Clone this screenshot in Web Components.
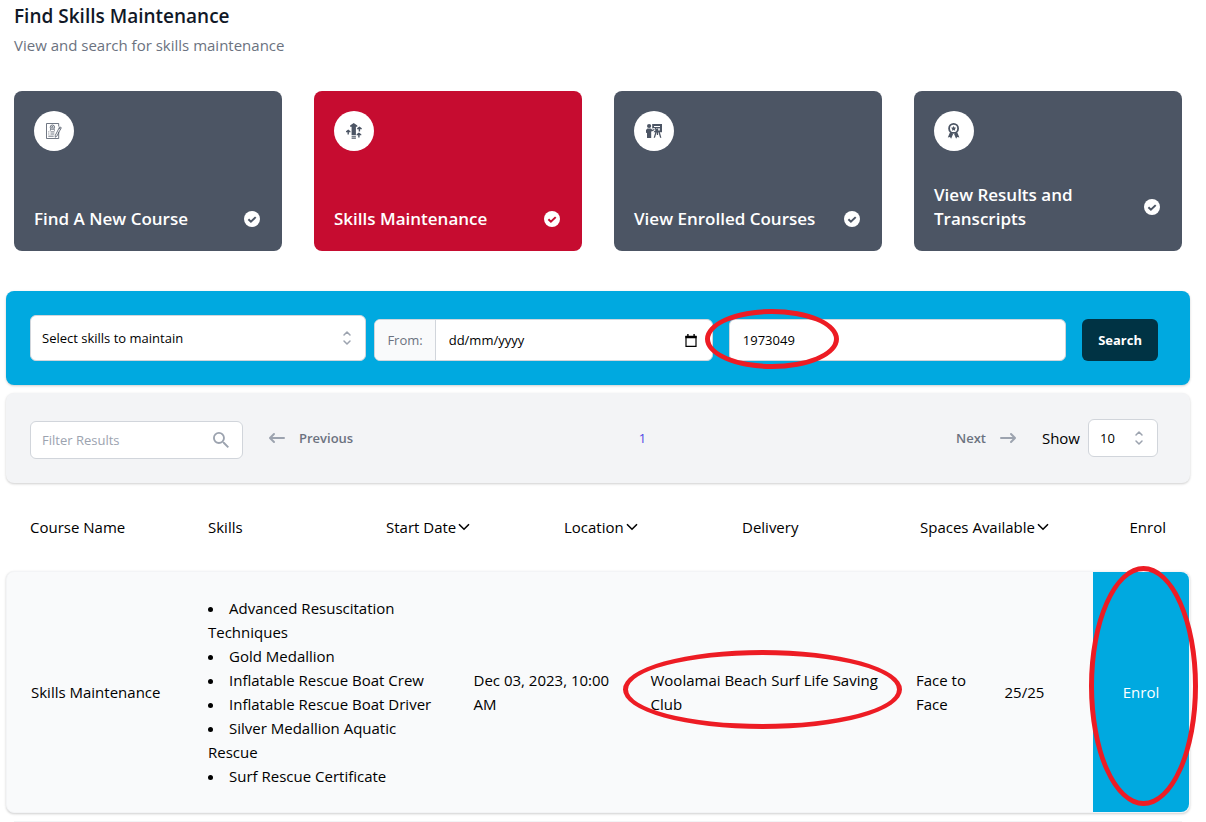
<!DOCTYPE html>
<html lang="en">
<head>
<meta charset="utf-8">
<meta name="viewport" content="width=device-width, initial-scale=1">
<title>Find Skills Maintenance</title>
<style>
  :root {
    --color-slate: #4c5564;
    --color-red: #c60c30;
    --color-blue: #00a9e0;
    --color-navy: #003344;
    --color-border: #d1d5db;
    --color-muted: #6b7280;
    --color-icon: #9ca3af;
    --color-mark: #ed1c24;
    --radius-sm: 6px;
    --radius-md: 8px;
    --shadow: 0 1px 3px rgb(0 0 0 / 12%), 0 1px 2px rgb(0 0 0 / 8%);
    --text-sm: 13px;
    --text-base: 15px;
  }

  body {
    margin: 0;
    background: #fff;
    color: #000;
    font: 400 15px/24px "Open Sans", "Noto Sans", sans-serif;
  }
</style>
</head>
<body>
<skills-page>
  <course-card slot="cards" icon="course">Find A New Course</course-card>
  <course-card slot="cards" icon="skills" active>Skills Maintenance</course-card>
  <course-card slot="cards" icon="enrolled">View Enrolled Courses</course-card>
  <course-card slot="cards" icon="results">View Results and Transcripts</course-card>
  <skills-search></skills-search>
  <results-toolbar></results-toolbar>
  <results-table></results-table>
</skills-page>

<script>
const icons = {
  course: `
    <svg viewBox="0 0 16 16" fill="none" stroke="#4c5564" stroke-width=".8">
      <path d="M12.7 8.8v6.7H.5V.5h12.2v3"/>
      <circle cx="6.4" cy="4.2" r="2.2"/><circle cx="6.4" cy="4.2" r=".8"/>
      <path d="M4.8 6l-.5 1.7M8 6l.5 1.7M2.3 8.9h1M4.5 8.9h4M2.3 11h1M4.5 11h3.8M2.3 13.2h5.4"/>
      <path d="M13.7 3.9l1.6.8-4.5 8.5-1.6 1 .1-1.9zM12.9 5.3l1.6.8"/>
    </svg>`,
  skills: `
    <svg viewBox="0 0 16 16" fill="#4c5564">
      <path d="M7.7 0l3.6 2.6v1.1H9.9v8.2H5.6V3.7H4.1V2.6zM5.6 12.7h4.3v1H5.6zM5.6 14.6h4.3v1.2H5.6z"/>
      <path d="M2.2 6.4l2.3 1.8v1H2.9v2.2H1.5V9.2H0v-1zM13.4 3.5l2.4 1.8v1h-1.7v2.2h-1.4V6.3h-1.6v-1zM12.9 9.4l2.4 1.8v1h-1.7v2.4h-1.4v-2.4h-1.6v-1z"/>
    </svg>`,
  enrolled: `
    <svg viewBox="0 0 16 16" fill="#4c5564">
      <circle cx="3.1" cy="3" r="2.1"/>
      <path d="M1.4 5.5h3.6l1.2 1.2 2-.7.5 1.1-2.9 1.5-.6-.4v6.8H1v-5L0 9.8V7z"/>
      <path fill-rule="evenodd" d="M6.2 1H16v8.2H7.6l.8-1.1h.8V5.9l-.8-.9-2.2.6zM8 2.9v1h6v-1zM10.4 5.2v.9h1v-.9zM12.2 5.2v2.3h1.6V5.2z"/>
      <path d="M9.3 9h1.4L9 14.8H7.7zM12.4 9h1.4l1.6 5.8h-1.3zM10.8 9h1.3v3h-1.3z"/>
    </svg>`,
  results: `
    <svg viewBox="0 0 16 16" fill="none" stroke="#4c5564" stroke-width="1.8">
      <circle cx="7.6" cy="5.4" r="4.5"/>
      <path d="M4 9.3h1.2l1.9 1.7-2 4.7-1.1-1.6-2.2.4zM11.2 9.3H10L8.100 11l2 4.700 1.100-1.600 2.200.4z" fill="#4c5564" stroke="none"/>
      <path d="M7.600 3l.8 1.600 1.800.2-1.300 1.200.3 1.800-1.600-.9-1.600.9.3-1.800L5 4.800l1.800-.2z" fill="#4c5564" stroke="none"/>
    </svg>`,
  check: `
    <svg viewBox="0 0 16 16">
      <circle cx="8" cy="8" r="8" fill="#fff"/>
      <path d="M4.4 8.3l2.5 2.4 4.8-4.6" fill="none" stroke="var(--card-color)" stroke-width="2"/>
    </svg>`,
  selector: `
    <svg class="selector" viewBox="0 0 20 20" fill="none" stroke="#9ca3af" stroke-width="1.5" stroke-linecap="round" stroke-linejoin="round">
      <path d="M7 7l3-3 3 3M13 13l-3 3-3-3"/>
    </svg>`,
  calendar: `
    <svg viewBox="0 0 12 13" width="12" height="13">
      <path d="M1 2.5h10v9.8H1z" fill="none" stroke="#000" stroke-width="1.2"/>
      <path d="M.4 1.7h11.2v2.6H.4zM2.2 0h1.4v2H2.2zM8.4 0h1.4v2H8.4z"/>
    </svg>`,
  search: `
    <svg viewBox="3 3 17.5 17.5" width="16" height="16" fill="#9ca3af">
      <path d="M15.5 14h-.79l-.28-.27A6.471 6.471 0 0 0 16 9.5 6.5 6.5 0 1 0 9.5 16c1.61 0 3.09-.59 4.23-1.57l.27.28v.79l5 4.99L20.49 19l-4.99-5zm-6 0C7.01 14 5 11.99 5 9.5S7.01 5 9.5 5 14 7.01 14 9.5 11.99 14 9.5 14z"/>
    </svg>`,
  arrowLeft: `
    <svg viewBox="0 0 20 20" width="20" height="20" fill="#9ca3af">
      <path d="M7.707 14.707a1 1 0 0 1-1.414 0l-4-4a1 1 0 0 1 0-1.414l4-4a1 1 0 0 1 1.414 1.414L5.414 9H17a1 1 0 1 1 0 2H5.414l2.293 2.293a1 1 0 0 1 0 1.414z"/>
    </svg>`,
  arrowRight: `
    <svg viewBox="0 0 20 20" width="20" height="20" fill="#9ca3af">
      <path d="M12.293 5.293a1 1 0 0 1 1.414 0l4 4a1 1 0 0 1 0 1.414l-4 4a1 1 0 0 1-1.414-1.414L14.586 11H3a1 1 0 1 1 0-2h11.586l-2.293-2.293a1 1 0 0 1 0-1.414z"/>
    </svg>`,
  chevron: `
    <svg viewBox="0 0 12 8" width="12" height="8" fill="none" stroke="#000" stroke-width="1.6">
      <path d="M1 1.2l5 5 5-5"/>
    </svg>`,
};

// Rules every shadow root starts from.
const base = `
  :host, *, *::before, *::after { box-sizing: border-box; }
  svg { display: block; flex: none; }
  input, select, button { margin: 0; font: inherit; color: inherit; }
  button { border: 0; padding: 0; background: none; cursor: pointer; }
`;

function define(tagName, html) {
  const template = document.createElement("template");
  template.innerHTML = html;

  customElements.define(tagName, class extends HTMLElement {
    constructor() {
      super();
      this.attachShadow({ mode: "open" }).append(template.content.cloneNode(true));
    }
  });
}

/** Ring laid over whatever it points out. */
define("ring-mark", `
  <style>
    :host {
      box-sizing: border-box;
      position: absolute;
      border: 5px solid var(--color-mark);
      border-radius: 50%;
      pointer-events: none;
    }
  </style>
`);

define("skills-page", `
  <style>
    ${base}
    :host {
      display: flex;
      flex-direction: column;
      gap: 8px;
      padding: 4px 16px 0 6px;
    }

    header {
      padding: 0 8px;
    }

    h1 {
      margin: 0;
      color: #111827;
      font-size: 19px;
      font-weight: 600;
      line-height: 24px;
    }

    p {
      margin: 5px 0 0;
      color: var(--color-muted);
      font-size: var(--text-base);
    }

    nav {
      display: grid;
      grid-template-columns: repeat(4, 1fr);
      gap: 32px;
      padding: 26px 8px 32px;
    }
  </style>
  <header>
    <h1>Find Skills Maintenance</h1>
    <p>View and search for skills maintenance</p>
  </header>
  <nav><slot name="cards"></slot></nav>
  <slot></slot>
`);

const cardTemplate = document.createElement("template");

cardTemplate.innerHTML = `
  <style>
    ${base}
    :host {
      --card-color: var(--color-slate);
      display: block;
    }

    :host([active]) {
      --card-color: var(--color-red);
    }

    a {
      display: flex;
      flex-direction: column;
      justify-content: space-between;
      min-height: 160px;
      border-radius: var(--radius-md);
      padding: 20px;
      background: var(--card-color);
      color: #fff;
      font-size: 17px;
      font-weight: 600;
      text-decoration: none;
    }

    .badge {
      display: grid;
      place-items: center;
      width: 40px;
      height: 40px;
      border-radius: 50%;
      background: #fff;
    }

    .row {
      display: flex;
      align-items: center;
      justify-content: space-between;
      gap: 16px;
      padding-right: 2px;
    }

    svg {
      width: 16px;
      height: 16px;
    }
  </style>
  <a href="#">
    <span class="badge"></span>
    <span class="row"><span><slot></slot></span>${icons.check}</span>
  </a>
`;

class CourseCard extends HTMLElement {
  constructor() {
    super();
    this.attachShadow({ mode: "open" }).append(cardTemplate.content.cloneNode(true));
  }

  connectedCallback() {
    this.shadowRoot.querySelector(".badge").innerHTML = icons[this.getAttribute("icon")] ?? "";
  }
}

customElements.define("course-card", CourseCard);

const selectTemplate = document.createElement("template");

selectTemplate.innerHTML = `
  <style>
    ${base}
    :host {
      display: grid;
      align-items: center;
      font-size: var(--text-sm);
    }

    select, .selector {
      grid-area: 1 / 1;
    }

    select {
      appearance: none;
      width: 100%;
      height: var(--select-height, 38px);
      border: 1px solid var(--color-border);
      border-radius: var(--radius-sm);
      padding: 0 32px 0 11px;
      background: #fff;
    }

    .selector {
      justify-self: end;
      width: 20px;
      height: 20px;
      margin-right: 9px;
      pointer-events: none;
    }
  </style>
  <select><option></option></select>
  ${icons.selector}
`;

class SelectBox extends HTMLElement {
  constructor() {
    super();
    this.attachShadow({ mode: "open" }).append(selectTemplate.content.cloneNode(true));
  }

  connectedCallback() {
    const select = this.shadowRoot.querySelector("select");
    select.setAttribute("aria-label", this.getAttribute("label"));
    select.options[0].textContent = this.getAttribute("value");
  }
}

customElements.define("select-box", SelectBox);

define("skills-search", `
  <style>
    ${base}
    :host {
      display: block;
      border-radius: var(--radius-md);
      padding: 24px 32px 24px 24px;
      background: var(--color-blue);
      box-shadow: var(--shadow);
      font-size: var(--text-sm);
    }

    form {
      display: flex;
      align-items: flex-end;
      gap: 16px;
    }

    .pair {
      display: flex;
      flex: 2 1 8px;
      align-items: flex-end;
      gap: 8px;
    }

    select-box {
      --select-height: 46px;
      flex: 1 1 0;
      min-width: 0;
    }

    .date, .number input {
      height: 42px;
      border: 1px solid var(--color-border);
      border-radius: var(--radius-sm);
      background: #fff;
    }

    .date {
      display: grid;
      grid-template-columns: auto 1fr auto;
      flex: 1 1 0;
      align-items: center;
      min-width: 0;
      overflow: hidden;
    }

    .date label {
      display: flex;
      align-items: center;
      align-self: stretch;
      border-right: 1px solid var(--color-border);
      padding: 0 12px;
      background: #f9fafb;
      color: var(--color-muted);
    }

    .date input {
      width: 100%;
      min-width: 0;
      border: 0;
      padding: 0 13px;
      background: none;
    }

    .date input::placeholder {
      color: #000;
      opacity: 1;
    }

    .date button {
      padding-right: 15px;
    }

    .number {
      position: relative;
      flex: 1 1 0;
    }

    .number input {
      display: block;
      width: 100%;
      padding: 0 13px;
    }

    .number ring-mark {
      top: -10px;
      left: -24px;
      width: 134px;
      height: 60px;
    }

    .submit {
      height: 42px;
      border-radius: var(--radius-sm);
      padding: 0 16px;
      background: var(--color-navy);
      color: #fff;
      font-weight: 700;
    }
  </style>
  <form>
    <div class="pair">
      <select-box label="Skills" value="Select skills to maintain"></select-box>
      <div class="date">
        <label for="from">From:</label>
        <input id="from" type="text" placeholder="dd/mm/yyyy">
        <button type="button" aria-label="Open calendar">${icons.calendar}</button>
      </div>
    </div>
    <div class="number">
      <input type="text" value="1973049" aria-label="Course number">
      <ring-mark></ring-mark>
    </div>
    <button class="submit" type="button">Search</button>
  </form>
`);

define("results-toolbar", `
  <style>
    ${base}
    :host {
      display: flex;
      align-items: center;
      gap: 24px;
      border-radius: var(--radius-md);
      padding: 24px 32px 24px 24px;
      background: #f3f4f6;
      box-shadow: var(--shadow);
      font-size: var(--text-sm);
    }

    .filter {
      display: flex;
      align-items: center;
      width: 213px;
      height: 38px;
      margin-top: 4px;
      border: 1px solid var(--color-border);
      border-radius: var(--radius-sm);
      padding: 0 13px 0 11px;
      background: #fff;
    }

    .filter input {
      flex: 1;
      min-width: 0;
      border: 0;
      padding: 0;
      background: none;
      outline: 0;
    }

    .filter input::placeholder {
      color: var(--color-icon);
      opacity: 1;
    }

    nav {
      display: flex;
      flex: 1;
      align-items: center;
    }

    nav a {
      display: flex;
      flex: 1;
      align-items: center;
      gap: 12px;
      color: var(--color-muted);
      font-weight: 600;
      text-decoration: none;
    }

    nav .page {
      flex: none;
      color: #4f46e5;
      font-weight: 500;
    }

    nav .next {
      justify-content: flex-end;
    }

    .size {
      display: flex;
      align-items: center;
      gap: 8px;
      font-size: var(--text-base);
    }

    .size select-box {
      width: 70px;
    }
  </style>
  <div class="filter">
    <input type="text" placeholder="Filter Results" aria-label="Filter Results">
    ${icons.search}
  </div>
  <nav aria-label="Pagination">
    <a href="#">${icons.arrowLeft}Previous</a>
    <a class="page" href="#" aria-current="page">1</a>
    <a class="next" href="#">Next${icons.arrowRight}</a>
  </nav>
  <div class="size">
    <span>Show</span>
    <select-box label="Show" value="10"></select-box>
  </div>
`);

define("results-table", `
  <style>
    ${base}
    :host {
      display: block;
      font-size: var(--text-base);
    }

    table, thead, tbody {
      display: block;
    }

    th, td {
      display: block;
      padding: 0;
      font-weight: 400;
      text-align: left;
    }

    thead tr {
      display: grid;
      grid-template-columns: repeat(6, 1fr) 68px;
      padding: 24px 24px 32px;
    }

    th:last-child {
      text-align: right;
    }

    th button {
      display: flex;
      align-items: center;
      gap: 2px;
      white-space: nowrap;
    }

    tbody tr {
      display: grid;
      grid-template-columns: 2fr 3fr 2fr 3fr 1fr 1fr 96px;
      align-items: center;
      border: 1px solid #f3f4f6;
      border-radius: var(--radius-md);
      padding-left: 24px;
      background: #f9fafb;
      box-shadow: var(--shadow);
    }

    td {
      position: relative;
      padding-right: 32px;
    }

    ul {
      margin: 0;
      padding: 24px 0;
      list-style: disc inside;
    }

    .spaces {
      padding: 0;
    }

    .enrol {
      align-self: stretch;
      padding: 0;
    }

    .enrol button {
      width: 100%;
      height: 100%;
      border-radius: 0 var(--radius-md) var(--radius-md) 0;
      background: var(--color-blue);
      color: #fff;
    }

    .location ring-mark {
      inset: -18px 14px -13px -28px;
    }

    .enrol ring-mark {
      inset: -6px -9px 6px -4px;
    }

    .following {
      height: 1px;
      margin: 8px 8px 0;
      background: #f3f4f6;
    }
  </style>
  <table>
    <thead>
      <tr>
        <th>Course Name</th>
        <th>Skills</th>
        <th><button type="button">Start Date${icons.chevron}</button></th>
        <th><button type="button">Location${icons.chevron}</button></th>
        <th>Delivery</th>
        <th><button type="button">Spaces Available${icons.chevron}</button></th>
        <th>Enrol</th>
      </tr>
    </thead>
    <tbody>
      <tr>
        <td>Skills Maintenance</td>
        <td>
          <ul>
            <li>Advanced Resuscitation Techniques</li>
            <li>Gold Medallion</li>
            <li>Inflatable Rescue Boat Crew</li>
            <li>Inflatable Rescue Boat Driver</li>
            <li>Silver Medallion Aquatic Rescue</li>
            <li>Surf Rescue Certificate</li>
          </ul>
        </td>
        <td>Dec 03, 2023, 10:00 AM</td>
        <td class="location">Woolamai Beach Surf Life Saving Club<ring-mark></ring-mark></td>
        <td>Face to Face</td>
        <td class="spaces">25/25</td>
        <td class="enrol"><button type="button">Enrol</button><ring-mark></ring-mark></td>
      </tr>
    </tbody>
  </table>
  <div class="following"></div>
`);
</script>
</body>
</html>
